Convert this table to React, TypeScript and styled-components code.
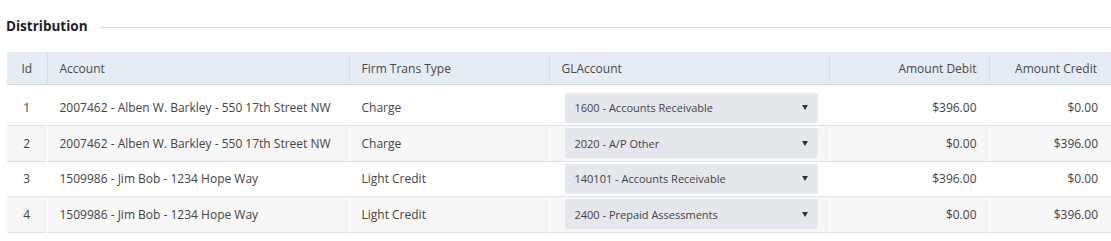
import React from "react";
import styled, { createGlobalStyle } from "styled-components";

const GlobalStyle = createGlobalStyle`
  body {
    margin: 0;
    background: #ffffff;
    font-family: "Open Sans", "Liberation Sans", sans-serif;
    color: #444;
  }
`;

const Page = styled.div`
  padding: 14px 0 0 7px;
  width: 1104px;
`;

const SectionHeader = styled.div`
  display: flex;
  align-items: center;
  gap: 12px;
  height: 24px;
  margin-bottom: 14px;
`;

const Title = styled.h3`
  margin: 0 0 0 -1px;
  font-size: 13.5px;
  font-weight: 700;
  color: #1d1e2c;
`;

const Rule = styled.div`
  flex: 1;
  height: 1px;
  background: #c6ddf6;
  margin-top: 2px;
`;

const Table = styled.table`
  width: 100%;
  border-collapse: collapse;
  table-layout: fixed;
  font-size: 12px;
`;

const HeadCell = styled.th<{ $align?: string }>`
  height: 32px;
  padding: 0 12px 0 12px;
  background: #e6ecf4;
  border-right: 1px solid #d9dee5;
  border-bottom: 1px solid #d4d9df;
  font-weight: 400;
  color: #4a4a4a;
  text-align: ${(p) => p.$align || "left"};
  white-space: nowrap;
  &:last-child {
    border-right: none;
    padding-right: 14px;
  }
`;

const Spacer = styled.tr`
  height: 6px;
`;

const Row = styled.tr<{ $striped?: boolean }>`
  background: ${(p) => (p.$striped ? "#f7f7f7" : "#ffffff")};
  border-bottom: 1px solid #e0e0e0;
`;

const Cell = styled.td<{ $align?: string }>`
  height: 34.5px;
  padding: 0 12px;
  color: #444;
  text-align: ${(p) => p.$align || "left"};
  border-right: 1px solid #ffffff;
  white-space: nowrap;
  &:last-child {
    border-right: none;
    padding-right: 13px;
  }
`;

const Select = styled.div`
  display: flex;
  align-items: center;
  justify-content: space-between;
  height: 30px;
  margin-left: 3px;
  width: 253px;
  box-sizing: border-box;
  padding: 0 10px 0 10px;
  background: #e4e7eb;
  border-radius: 3px;
  font-size: 11px;
  color: #444;
`;

const Caret = styled.span`
  width: 0;
  height: 0;
  border-left: 3.5px solid transparent;
  border-right: 3.5px solid transparent;
  border-top: 5px solid #333;
`;

const rows = [
  { id: 1, account: "2007462 - Alben W. Barkley - 550 17th Street NW", type: "Charge", gl: "1600 - Accounts Receivable", debit: "$396.00", credit: "$0.00" },
  { id: 2, account: "2007462 - Alben W. Barkley - 550 17th Street NW", type: "Charge", gl: "2020 - A/P Other", debit: "$0.00", credit: "$396.00" },
  { id: 3, account: "1509986 - Jim Bob - 1234 Hope Way", type: "Light Credit", gl: "140101 - Accounts Receivable", debit: "$396.00", credit: "$0.00" },
  { id: 4, account: "1509986 - Jim Bob - 1234 Hope Way", type: "Light Credit", gl: "2400 - Prepaid Assessments", debit: "$0.00", credit: "$396.00" },
];

const App: React.FC = () => {
  return (
    <Page>
      <GlobalStyle />
      <SectionHeader>
        <Title>Distribution</Title>
        <Rule />
      </SectionHeader>
      <Table>
        <colgroup>
          <col style={{ width: 40 }} />
          <col style={{ width: 302 }} />
          <col style={{ width: 200 }} />
          <col style={{ width: 280 }} />
          <col style={{ width: 160 }} />
          <col />
        </colgroup>
        <thead>
          <tr>
            <HeadCell $align="center">Id</HeadCell>
            <HeadCell>Account</HeadCell>
            <HeadCell>Firm Trans Type</HeadCell>
            <HeadCell>GLAccount</HeadCell>
            <HeadCell $align="right">Amount Debit</HeadCell>
            <HeadCell $align="right">Amount Credit</HeadCell>
          </tr>
        </thead>
        <tbody>
          <Spacer />
          {rows.map((r) => (
            <Row key={r.id} $striped={r.id % 2 === 0}>
              <Cell $align="center">{r.id}</Cell>
              <Cell>{r.account}</Cell>
              <Cell>{r.type}</Cell>
              <Cell>
                <Select>
                  <span>{r.gl}</span>
                  <Caret />
                </Select>
              </Cell>
              <Cell $align="right">{r.debit}</Cell>
              <Cell $align="right">{r.credit}</Cell>
            </Row>
          ))}
        </tbody>
      </Table>
    </Page>
  );
};

export default App;
